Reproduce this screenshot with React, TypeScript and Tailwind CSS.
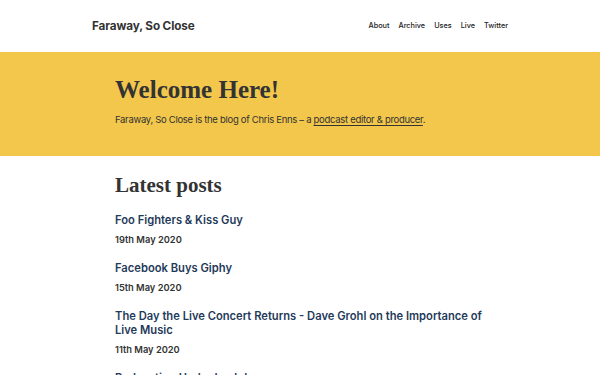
import type { ReactNode } from "react";

type Post = {
  title: string;
  date: string;
};

const posts: Post[] = [
  { title: "Foo Fighters & Kiss Guy", date: "19th May 2020" },
  { title: "Facebook Buys Giphy", date: "15th May 2020" },
  {
    title: "The Day the Live Concert Returns - Dave Grohl on the Importance of Live Music",
    date: "11th May 2020",
  },
  { title: "Podcasting Under Lockdown", date: "4th May 2020" },
];

const navLinks = ["About", "Archive", "Uses", "Live", "Twitter"];

function Container({ children, className = "" }: { children: ReactNode; className?: string }) {
  return <div className={`mx-auto w-[370px] ${className}`}>{children}</div>;
}

export default function App() {
  return (
    <div className="min-h-screen bg-white text-[#333] font-['Inter','Liberation_Sans',sans-serif]">
      <header className="h-[52px] flex items-center">
        <div className="mx-auto w-[416px] flex items-center justify-between pt-[1px]">
          <a className="text-[11.7px] font-bold tracking-[-0.1px] text-[#333]">Faraway, So Close</a>
          <nav className="flex gap-[9px] text-[7.3px] font-medium text-[#222]">
            {navLinks.map((link) => (
              <a key={link}>{link}</a>
            ))}
          </nav>
        </div>
      </header>

      <section className="bg-[#f2c74b] h-[104px] pt-[22px]">
        <Container>
          <h1 className="text-[25px] leading-[32px] font-bold font-['Liberation_Serif',serif] text-[#333]">
            Welcome Here!
          </h1>
          <p className="mt-[7px] text-[9.5px] leading-[14px] tracking-[-0.3px] text-[#333]">
            Faraway, So Close is the blog of Chris Enns – a{" "}
            <a className="underline underline-offset-[1.5px]">podcast editor &amp; producer</a>.
          </p>
        </Container>
      </section>

      <main>
        <Container className="pt-[15px]">
          <h2 className="text-[21px] leading-[28px] font-bold font-['Liberation_Serif',serif] text-[#333]">
            Latest posts
          </h2>
          <ul className="mt-[14px] flex flex-col gap-[14px]">
            {posts.map((post) => (
              <li key={post.title}>
                <a className="block text-[11.2px] leading-[14px] font-semibold text-[#1f3a5a]">
                  {post.title}
                </a>
                <p className="mt-[6px] text-[9.3px] leading-[14px] font-semibold text-[#333]">{post.date}</p>
              </li>
            ))}
          </ul>
        </Container>
      </main>
    </div>
  );
}
